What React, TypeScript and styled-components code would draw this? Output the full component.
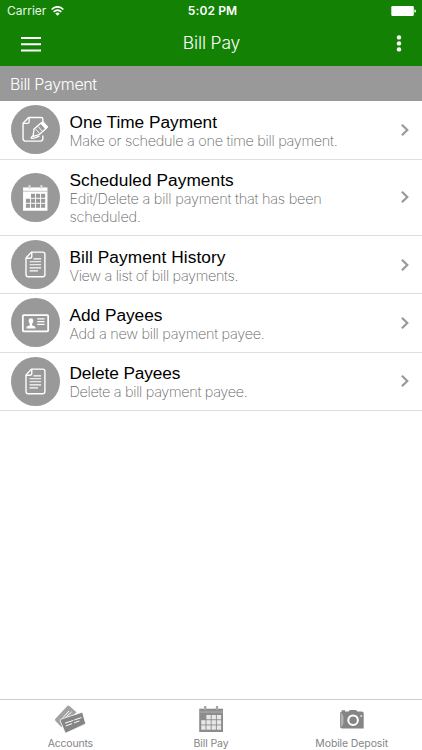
import React from "react";
import styled, { createGlobalStyle } from "styled-components";

const GlobalStyle = createGlobalStyle`
  * { box-sizing: border-box; }
  html, body { margin: 0; background: #fff; }
  body { font-family: "Liberation Sans", Arial, sans-serif; }
  button { font: inherit; border: 0; padding: 0; background: none; color: inherit; }
  svg { display: block; }
`;

const Screen = styled.div`
  width: 422px;
  height: 750px;
  display: flex;
  flex-direction: column;
  overflow: hidden;
  background: #fff;
`;

const Header = styled.header`
  height: 65.7px;
  flex: none;
  background: #138104;
  color: #fff;
`;

const StatusBar = styled.div`
  height: 22px;
  display: grid;
  grid-template-columns: 1fr auto 1fr;
  align-items: center;
  padding: 0 6px 0 7px;
  font-family: Inter, sans-serif;
  line-height: 22px;
`;

const Carrier = styled.span`
  display: flex;
  align-items: center;
  gap: 5px;
  font-size: 12px;
  letter-spacing: 0;
  color: #e9f6e6;
`;

const Clock = styled.span`
  font-size: 12px;
  font-weight: 600;
  letter-spacing: 0.1px;
  padding-left: 2px;
`;

const Battery = styled.span`
  justify-self: end;
`;

const NavBar = styled.div`
  height: 43px;
  display: grid;
  grid-template-columns: 1fr auto 1fr;
  align-items: center;
  padding: 0 20px 0 21px;
`;

const IconButton = styled.button<{ $end?: boolean }>`
  justify-self: ${(p) => (p.$end ? "end" : "start")};
`;

const Light = styled.span<{ $spacing: number }>`
  display: block;
  font-family: Inter, sans-serif;
  font-weight: 300;
  letter-spacing: ${(p) => p.$spacing}px;
  white-space: nowrap;
`;

const NavTitle = styled(Light)`
  font-size: 17.5px;
  line-height: 22px;
  margin-bottom: 2px;
`;

const SectionTitle = styled.div`
  height: 35.3px;
  flex: none;
  padding: 7.3px 10px 0;
  background: #999;
  color: #fff;
`;

const SectionLabel = styled(Light)`
  font-size: 16px;
  line-height: 22px;
`;

const List = styled.main`
  flex: 1;
`;

const Row = styled.div<{ $height: number }>`
  height: ${(p) => p.$height}px;
  display: flex;
  align-items: center;
  padding: 0 12px 0 10.5px;
  border-bottom: 1px solid #dedede;
`;

const Disc = styled.div`
  width: 49px;
  height: 49px;
  flex: none;
  border-radius: 50%;
  background: #999;
`;

const RowText = styled.div`
  flex: 1;
  margin-left: 10px;
  padding-top: 2px;
`;

const RowTitle = styled.div<{ $spacing: number }>`
  font-size: 17.3px;
  line-height: 20px;
  letter-spacing: ${(p) => p.$spacing}px;
  color: #000;
`;

const Description = styled(Light)`
  font-size: 14.5px;
  font-weight: 250;
  line-height: 18px;
  color: #666;
`;

const TabBar = styled.nav`
  height: 51px;
  flex: none;
  display: grid;
  grid-template-columns: repeat(3, 1fr);
  border-top: 1px solid #ccc;
`;

const Tab = styled.button`
  display: flex;
  flex-direction: column;
  align-items: center;
  padding-top: 4px;
  color: #858585;
`;

const TabLabel = styled.span<{ $spacing: number }>`
  font-family: Inter, sans-serif;
  font-size: 10.5px;
  line-height: 14px;
  margin-top: 2.5px;
  letter-spacing: ${(p) => p.$spacing}px;
`;

const PaymentIcon = () => (
  <svg width="49" height="49" viewBox="0 0 50 50" fill="none" stroke="#fff" strokeWidth="1.4" strokeLinejoin="round">
    <path d="M32.5 17V14.5Q32.5 12.7 30.7 12.7H18L12.3 18.7V34.3Q12.3 36.8 14.5 36.8H30.3Q32.5 36.8 32.5 34.3V31" />
    <path d="M18.5 12.7V17Q18.5 18.7 16.8 18.7H12.3" />
    <path d="M23.5 24.5L31 18.2L36 23.8L28.6 30.3L22.5 32Z" fill="#999" />
    <path d="M30.2 18.6L32.5 16.7L37.7 22.4L35.4 24.5Z" fill="#fff" strokeWidth="1" />
    <path d="M25 24.5L29.2 29M27.8 22.1L32 26.8" strokeWidth="1" />
    <path d="M22.7 31.5Q19.7 33.2 21 34Q22 34.5 29 31.7" />
  </svg>
);

const DocumentIcon = () => (
  <svg width="49" height="49" viewBox="0 0 50 50" fill="none" stroke="#fff" strokeWidth="1.4" strokeLinejoin="round">
    <path d="M20.8 12.4H32.3Q34.6 12.4 34.6 14.5V35.2Q34.6 37.5 32.3 37.5H17.6Q15.3 37.5 15.3 35.2V18.3Z" />
    <path d="M21.2 12.5V16.5Q21.2 18.6 19.2 18.6H15.5" />
    <path d="M22.9 19.2H30.7M19 22.2H30.7M19 25.3H30.7M19 28.4H30.7M19 31.5H27.5" strokeWidth="1.15" />
  </svg>
);

const gridCells = [0, 1, 2].flatMap((r) =>
  [0, 1, 2, 3].filter((c) => r > 0 || c > 0).map((c) => ({ r, c })),
);

const CalendarIcon = () => (
  <svg width="49" height="49" viewBox="0 0 50 50">
    <path d="M12.3 14.7H37.2V38.5H12.3Z" fill="#fff" />
    <path d="M12.3 18.6H37.2" stroke="#aaa" strokeWidth=".7" />
    <path d="M18.9 12.2V16M31 12.2V16" stroke="#ddd" strokeWidth="2" />
    {gridCells.map(({ r, c }) => (
      <rect key={`${r}-${c}`} x={15.2 + c * 5.15} y={21.2 + r * 5.1} width="4.2" height="4.1" fill="#999" />
    ))}
  </svg>
);

const ContactIcon = () => (
  <svg width="49" height="49" viewBox="0 0 50 50" fill="#fff">
    <rect x="12.1" y="17.5" width="25.8" height="16.5" rx=".8" fill="none" stroke="#fff" strokeWidth="1.8" />
    <path d="M15.8 31.2V29.3L19.2 27.8V26.6Q17.8 25.3 18 22.8Q18.1 20.7 20.3 20.7Q22.5 20.7 22.7 22.8Q22.9 25.3 21.5 26.6V27.8L24.9 29.3V31.2Z" />
    <path d="M26.8 21.2H34.2M26.8 24H34.2M26.8 26.8H34.2" stroke="#fff" strokeWidth="1.3" />
  </svg>
);

const Chevron = () => (
  <svg width="10" height="14" viewBox="0 0 10 14" fill="none" stroke="#999" strokeWidth="2.2">
    <path d="M1.9 1.7L7.3 7L1.9 12.3" />
  </svg>
);

const CardsTabIcon = () => (
  <svg width="32" height="30" viewBox="0 0 32 30">
    <path d="M1.4 14.7L13.3 2.1Q14.4 1 15.5 2L22.5 8.2L7.5 23.2L1.5 17Q.4 15.8 1.4 14.7Z" fill="#a2a2a2" />
    <path d="M9 13.6L15.1 7M12.4 12.7L17.6 8" stroke="#fff" strokeWidth="1" />
    <path d="M7 15.2L27.3 8.5Q28.4 8.2 28.8 9.3L31.4 18.7Q31.7 19.9 30.6 20.4L12.5 28.8Q11.4 29.2 10.8 28L6.3 17Q5.8 15.7 7 15.2Z" fill="#858585" stroke="#fff" strokeWidth=".8" />
    <path d="M11 19.2L19.3 16.4M20.3 16L27.5 13.5M11.8 21.9L18.2 19.6M20 18.9L25.4 16.9" stroke="#fff" strokeWidth="1" />
  </svg>
);

const CalendarTabIcon = () => (
  <svg width="32" height="30" viewBox="0 0 32 30">
    <path d="M4.2 4.7H28V28H4.2Z" fill="#8c8c8c" />
    <path d="M4.2 8H28" stroke="#bbb" strokeWidth=".8" />
    <path d="M10.2 2V6.2M22 2V6.2" stroke="#a5a5a5" strokeWidth="2.2" />
    {gridCells.map(({ r, c }) => (
      <rect key={`${r}-${c}`} x={6.2 + c * 5.2} y={11 + r * 5.2} width="4.3" height="4.3" fill="#e8e8e8" />
    ))}
  </svg>
);

const CameraTabIcon = () => (
  <svg width="32" height="30" viewBox="0 0 32 30">
    <path d="M4 9.8Q4 7.6 5.7 7.4V6.2H9V7.4H12.5L14 6.1H20L21.5 7.4H25.7Q27.7 7.4 27.7 9.4V24.5H6.2Q4 24.5 4 22.3Z" fill="#858585" />
    <path d="M4.6 8.8Q7.5 10 7.5 14V18Q7.5 22 4.6 23Z" fill="#b2b2b2" />
    <circle cx="17.1" cy="16.2" r="4.8" fill="#858585" stroke="#fff" strokeWidth="2" />
    <circle cx="25.2" cy="11.9" r="1" fill="#ddd" />
  </svg>
);

const rows = [
  { title: "One Time Payment", spacing: -0.03, icon: PaymentIcon, height: 58.7, lines: [{ text: "Make or schedule a one time bill payment.", spacing: -0.3 }] },
  { title: "Scheduled Payments", spacing: 0.05, icon: CalendarIcon, height: 76.2, lines: [{ text: "Edit/Delete a bill payment that has been", spacing: -0.23 }, { text: "scheduled.", spacing: -0.22 }] },
  { title: "Bill Payment History", spacing: 0.07, icon: DocumentIcon, height: 58.4, lines: [{ text: "View a list of bill payments.", spacing: -0.35 }] },
  { title: "Add Payees", spacing: -0.03, icon: ContactIcon, height: 58.4, lines: [{ text: "Add a new bill payment payee.", spacing: -0.3 }] },
  { title: "Delete Payees", spacing: -0.12, icon: DocumentIcon, height: 58.4, lines: [{ text: "Delete a bill payment payee.", spacing: -0.33 }] },
];

const tabs = [
  { label: "Accounts", spacing: -0.2, icon: CardsTabIcon },
  { label: "Bill Pay", spacing: -0.1, icon: CalendarTabIcon },
  { label: "Mobile Deposit", spacing: -0.12, icon: CameraTabIcon },
];

export default function App() {
  return (
    <Screen>
      <GlobalStyle />
      <Header>
        <StatusBar>
          <Carrier>
            Carrier
            <svg width="13" height="10" viewBox="0 0 13 10" fill="none" stroke="#fff" strokeWidth="1.6">
              <path d="M.6 3.5Q6.5-1.9 12.4 3.5M2.6 5.8Q6.5 2.3 10.4 5.8" />
              <path d="M4.3 7.5Q6.5 5.6 8.7 7.5L6.5 9.7Z" fill="#fff" stroke="none" />
            </svg>
          </Carrier>
          <Clock>5:02 PM</Clock>
          <Battery>
            <svg width="25" height="10" viewBox="0 0 25 10" fill="#fff">
              <rect x=".3" width="22.5" height="10" rx="1.3" />
              <path d="M23.4 3.2Q25 3.6 25 5T23.4 6.8Z" />
            </svg>
          </Battery>
        </StatusBar>
        <NavBar>
          <IconButton aria-label="Menu">
            <svg width="20" height="16" viewBox="0 0 20 16" stroke="#fff" strokeWidth="2">
              <path d="M0 2H20M0 8.3H20M0 14.5H20" />
            </svg>
          </IconButton>
          <NavTitle $spacing={-0.15}>Bill Pay</NavTitle>
          <IconButton $end aria-label="More">
            <svg width="6" height="18" viewBox="0 0 6 18" fill="#fff">
              <circle cx="3" cy="2.4" r="2.2" />
              <circle cx="3" cy="8.4" r="2.2" />
              <circle cx="3" cy="14.4" r="2.2" />
            </svg>
          </IconButton>
        </NavBar>
      </Header>
      <SectionTitle>
        <SectionLabel $spacing={-0.35}>Bill Payment</SectionLabel>
      </SectionTitle>
      <List>
        {rows.map(({ title, spacing, icon: Icon, height, lines }) => (
          <Row key={title} $height={height}>
            <Disc><Icon /></Disc>
            <RowText>
              <RowTitle $spacing={spacing}>{title}</RowTitle>
              {lines.map((line) => (
                <Description key={line.text} $spacing={line.spacing}>{line.text}</Description>
              ))}
            </RowText>
            <Chevron />
          </Row>
        ))}
      </List>
      <TabBar>
        {tabs.map(({ label, spacing, icon: Icon }) => (
          <Tab key={label}>
            <Icon />
            <TabLabel $spacing={spacing}>{label}</TabLabel>
          </Tab>
        ))}
      </TabBar>
    </Screen>
  );
}
